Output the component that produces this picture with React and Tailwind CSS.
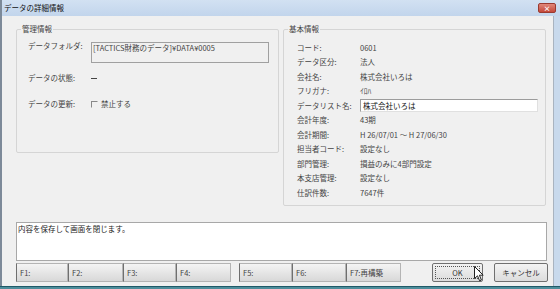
import React from 'react';

const font = { fontFamily: '"Noto Sans CJK JP", "Liberation Sans", sans-serif' };

const infoRows = [
  ['コード:', '0601'],
  ['データ区分:', '法人'],
  ['会社名:', '株式会社いろは'],
  ['フリガナ:', 'ｲﾛﾊ'],
  ['データリスト名:', null],
  ['会計年度:', '43期'],
  ['会計期間:', 'H 26/07/01 ～ H 27/06/30'],
  ['担当者コード:', '設定なし'],
  ['部門管理:', '損益のみに4部門設定'],
  ['本支店管理:', '設定なし'],
  ['仕訳件数:', '7647件'],
];

const fkeys = [
  ['F1:', 'w-[52px]'],
  ['F2:', 'w-[55px]'],
  ['F3:', 'w-[53px]'],
  ['F4:', 'w-[55px]'],
];
const fkeys2 = [
  ['F5:', 'w-[53px]'],
  ['F6:', 'w-[54px]'],
  ['F7:再構築', 'w-[55px]'],
];

const FKey = ({ label, w }) => (
  <div className={`${w} h-full flex items-center pl-[3px] border border-[#b4b4b4] border-l-[#6f6f6f] bg-gradient-to-b from-[#f4f4f4] to-[#d8d8d8] text-[7.5px] text-[#444]`}>
    {label}
  </div>
);

const Cursor = () => (
  <svg className="absolute left-[474px] top-[266px]" width="10" height="16" viewBox="0 0 10 16">
    <path d="M0.5 0.5 L0.5 12.5 L3.5 9.8 L5.6 14.8 L7.4 14 L5.4 9.2 L9.2 9.2 Z" fill="#fff" stroke="#222" strokeWidth="1" strokeLinejoin="round" />
  </svg>
);

export default function App() {
  return (
    <div className="relative w-[560px] h-[289px] flex flex-col overflow-hidden select-none" style={font}>
      {/* title bar */}
      <div className="h-[16px] flex items-center justify-between bg-gradient-to-b from-[#d2e1f2] to-[#c2d5ec] border-l-2 border-[#7d8a99] pl-[2px] pr-[4px]">
        <span className="text-[7.5px] text-[#111] leading-none">データの詳細情報</span>
        <div className="w-[18px] h-[10px] rounded-[2px] bg-gradient-to-b from-[#e0877a] to-[#c4483a] border border-[#9a3a30] flex items-center justify-center text-white text-[7px] font-bold leading-none">
          ×
        </div>
      </div>

      <div className="flex-1 flex">
        <div className="flex-1 flex flex-col bg-[#f0f0f0] border-l-2 border-[#7d8a99] pl-[14px] pt-[13px]">
          {/* group boxes */}
          <div className="flex items-start gap-[4px]">
            <div className="relative w-[263px] h-[124px] border border-[#d5d5d5] rounded-[2px] pl-[11px] pt-[9px] text-[7.5px] text-[#444]">
              <span className="absolute left-[4px] -top-[6px] bg-[#f0f0f0] px-[1px] leading-[10px]">管理情報</span>
              <div className="flex items-start">
                <div className="w-[63px] h-[14px] flex items-center">データフォルダ:</div>
                <div className="mt-[3px] w-[178px] h-[21px] border border-[#a0a0a0] bg-[#f0f0f0] pl-[1px] leading-[9px]">
                  [TACTICS財務のデータ]¥DATA¥0005
                </div>
              </div>
              <div className="flex items-center h-[14px] mt-[8px]">
                <div className="w-[63px]">データの状態:</div>
                <div className="w-[6px] h-px bg-[#444]" />
              </div>
              <div className="flex items-center h-[14px] mt-[12px]">
                <div className="w-[63px]">データの更新:</div>
                <div className="w-[7px] h-[7px] border border-[#888] border-b-transparent border-r-transparent mr-[3px]" />
                <div>禁止する</div>
              </div>
            </div>

            <div className="relative w-[263px] h-[177px] border border-[#d5d5d5] rounded-[2px] pl-[13px] pt-[10px] text-[7.5px] text-[#444]">
              <span className="absolute left-[4px] -top-[6px] bg-[#f0f0f0] px-[1px] leading-[10px]">基本情報</span>
              {infoRows.map(([k, v]) => (
                <div key={k} className="flex items-center h-[14.5px]">
                  <div className="w-[63px]">{k}</div>
                  {v === null ? (
                    <div className="w-[178px] h-[13px] border border-[#9c9c9c] border-b-[#e0e0e0] border-r-[#e0e0e0] bg-white pl-[2px] leading-[11px] text-[#111]">
                      株式会社いろは
                    </div>
                  ) : (
                    <div>{v}</div>
                  )}
                </div>
              ))}
            </div>
          </div>

          {/* message box */}
          <div className="mt-[16px] w-[531px] h-[39px] border border-[#a8a8a8] bg-white pl-[1px] text-[7.5px] text-[#222] leading-[11px]">
            内容を保存して画面を閉じます。
          </div>

          {/* function keys */}
          <div className="mt-[2px] h-[19px] flex">
            {fkeys.map(([l, w]) => (
              <FKey key={l} label={l} w={w} />
            ))}
            <div className="w-[8px]" />
            {fkeys2.map(([l, w]) => (
              <FKey key={l} label={l} w={w} />
            ))}
            <div className="w-[31px]" />
            <div className="w-[51px] h-full rounded-[2px] border border-[#707070] bg-gradient-to-b from-[#f3f3f3] to-[#dcdcdc] p-[2px]">
              <div className="w-full h-full border border-dotted border-[#555] flex items-center justify-center text-[7.5px] text-[#333]">
                OK
              </div>
            </div>
            <div className="w-[11px]" />
            <div className="w-[54px] h-full rounded-[2px] border border-[#707070] bg-gradient-to-b from-[#f3f3f3] to-[#dcdcdc] flex items-center justify-center text-[7.5px] text-[#333]">
              キャンセル
            </div>
          </div>
        </div>
        <div className="w-[7px] border-l border-[#a9b3bf] bg-[#c8d9ec]" />
      </div>
      <div className="h-[3px] border-t border-[#1f5a68] bg-[#4e8d9b]" />
      <Cursor />
    </div>
  );
}
